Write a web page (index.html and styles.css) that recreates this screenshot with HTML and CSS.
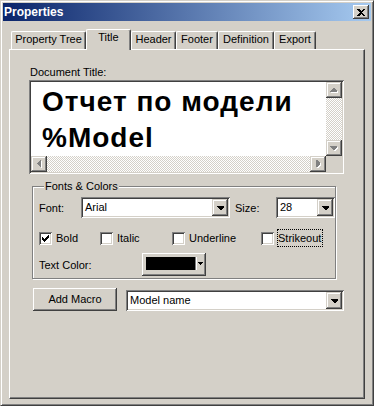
FILE: index.html
```html
<!DOCTYPE html>
<html lang="ru">
<head>
	<meta charset="UTF-8">
	<title>Properties</title>
	<link rel="stylesheet" href="styles.css">
</head>

<body>
	<div class="window">
		<div class="caption">
			<span class="caption-text">Properties</span>
			<span class="btn close-btn">
				<svg width="8" height="7" viewBox="0 0 8 7"><path d="M0 0H2L4 2L6 0H8L5 3.5L8 7H6L4 5L2 7H0L3 3.5Z"/></svg>
			</span>
		</div>

		<div class="dlg">
			<div class="tabs">
				<div class="tab tab-tree">Property Tree</div>
				<div class="tab tab-title active">Title</div>
				<div class="tab tab-header">Header</div>
				<div class="tab tab-footer">Footer</div>
				<div class="tab tab-def">Definition</div>
				<div class="tab tab-export">Export</div>
			</div>

			<div class="panel">
				<div class="doc-label">Document Title:</div>
				<div class="editbox">
					<div class="edit-text">Отчет по модели<br>%Model</div>
					<div class="vscroll">
						<span class="sbtn"><svg width="8" height="5" viewBox="0 0 8 5"><polygon class="hl" points="4,1 5,1 8,4 8,5 1,5 1,4"/><polygon class="ar" points="3,0 4,0 7,3 7,4 0,4 0,3"/></svg></span>
						<span class="track"></span>
						<span class="sbtn"><svg width="8" height="5" viewBox="0 0 8 5"><polygon class="hl" points="1,1 8,1 8,2 5,5 4,5 1,2"/><polygon class="ar" points="0,0 7,0 7,1 4,4 3,4 0,1"/></svg></span>
					</div>
					<div class="hscroll">
						<span class="sbtn"><svg width="5" height="8" viewBox="0 0 5 8"><polygon class="hl" points="1,4 4,1 5,1 5,8 4,8 1,5"/><polygon class="ar" points="0,3 3,0 4,0 4,7 3,7 0,4"/></svg></span>
						<span class="track"></span>
						<span class="sbtn"><svg width="5" height="8" viewBox="0 0 5 8"><polygon class="hl" points="1,1 2,1 5,4 5,5 2,8 1,8"/><polygon class="ar" points="0,0 1,0 4,3 4,4 1,7 0,7"/></svg></span>
					</div>
					<div class="corner"></div>
				</div>

				<fieldset class="group">
					<legend>Fonts &amp; Colors</legend>
					<div class="font-row">
						<span class="lbl-font">Font:</span>
						<div class="combo combo-font">
							<span class="combo-val">Arial</span>
							<span class="combo-btn"><svg width="7" height="4" viewBox="0 0 7 4"><polygon points="0,0 7,0 7,1 4,4 3,4 0,1"/></svg></span>
						</div>
						<span class="lbl-size">Size:</span>
						<div class="combo combo-size">
							<span class="combo-val">28</span>
							<span class="combo-btn"><svg width="7" height="4" viewBox="0 0 7 4"><polygon points="0,0 7,0 7,1 4,4 3,4 0,1"/></svg></span>
						</div>
					</div>
					<div class="checks">
						<label class="check"><span class="cbox"><svg width="7" height="7" viewBox="0 0 7 7"><polygon points="0,1.5 2.5,4 7,-0.5 7,2.5 2.5,7 0,4.5"/></svg></span><span class="check-text">Bold</span></label>
						<label class="check"><span class="cbox"></span><span class="check-text">Italic</span></label>
						<label class="check"><span class="cbox"></span><span class="check-text">Underline</span></label>
						<label class="check"><span class="cbox"></span><span class="check-text focus">Strikeout</span></label>
					</div>
					<div class="color-row">
						<span class="lbl-color">Text Color:</span>
						<div class="btn color-btn">
							<span class="swatch"></span>
							<span class="color-sep"></span>
							<span class="color-arrow"><svg width="5" height="3" viewBox="0 0 5 3"><polygon points="0,0 5,0 3,3 2,3"/></svg></span>
						</div>
					</div>
				</fieldset>

				<div class="macro-row">
					<div class="btn macro-btn">Add Macro</div>
					<div class="combo combo-macro">
						<span class="combo-val">Model name</span>
						<span class="combo-btn"><svg width="7" height="4" viewBox="0 0 7 4"><polygon points="0,0 7,0 7,1 4,4 3,4 0,1"/></svg></span>
					</div>
				</div>
			</div>
		</div>
	</div>
</body>

</html>
```

FILE: styles.css
```css
		*{
			margin: 0;
			padding: 0;
			box-sizing: border-box;
		}
		body{
			background-color: #d4d0c8;
			font: 11px "Liberation Sans", Arial, sans-serif;
			color: #000;
		}
		svg{
			display: block;
			shape-rendering: crispEdges;
		}
		/* window frame */
		.window{
			width: 374px;
			height: 406px;
			padding: 2px;
			border: 1px solid;
			border-color: #d4d0c8 #404040 #404040 #d4d0c8;
			box-shadow: inset 1px 1px #fff, inset -1px -1px #808080;
			display: flex;
			flex-direction: column;
		}
		.caption{
			height: 18px;
			display: flex;
			align-items: center;
			justify-content: space-between;
			padding: 0 2px 0 1px;
			background: linear-gradient(to right, #0a246a, #a6caf0);
			color: #fff;
			font-weight: bold;
			font-size: 12px;
		}
		.btn{
			background-color: #d4d0c8;
			box-shadow: inset -1px -1px #404040, inset 1px 1px #fff, inset -2px -2px #808080, inset 2px 2px #d4d0c8;
		}
		.close-btn{
			width: 16px;
			height: 14px;
			display: flex;
			align-items: center;
			justify-content: center;
		}
		.dlg{
			flex: 1;
			padding: 8px 6px 4px;
			display: flex;
			flex-direction: column;
		}
		/* tabs */
		.tabs{
			display: flex;
			align-items: flex-end;
			height: 20px;
			padding-left: 2px;
		}
		.tab{
			height: 18px;
			border: 1px solid #fff;
			border-bottom: 0;
			border-right-color: #404040;
			border-radius: 2px 2px 0 0;
			box-shadow: inset -1px 0 #808080;
			text-align: center;
			padding-top: 1px;
			line-height: 13px;
			white-space: nowrap;
		}
		.tab.active{
			height: 21px;
			margin-bottom: -1px;
			position: relative;
			z-index: 1;
			background-color: #d4d0c8;
		}
		.tab-tree{ width: 75px; }
		.tab-title{ width: 45px; }
		.tab-header{ width: 45px; }
		.tab-footer{ width: 42px; }
		.tab-def{ width: 56px; }
		.tab-export{ width: 42px; }
		.panel{
			flex: 1;
			border: 1px solid;
			border-color: #fff #404040 #404040 #fff;
			box-shadow: inset -1px -1px #808080;
			padding: 16px 0 0 19px;
		}
		.doc-label{
			line-height: 13px;
			padding-left: 1px;
		}
		/* title edit box */
		.editbox{
			width: 315px;
			height: 94px;
			margin-top: 1px;
			padding: 2px;
			background-color: #fff;
			box-shadow: inset 1px 1px #808080, inset -1px -1px #fff, inset 2px 2px #404040, inset -2px -2px #d4d0c8;
			display: grid;
			grid-template-columns: 1fr 16px;
			grid-template-rows: 1fr 16px;
		}
		.edit-text{
			font: bold 28px/36px "Liberation Sans", Arial, sans-serif;
			letter-spacing: 1px;
			padding: 2px 0 0 11px;
			white-space: nowrap;
			overflow: hidden;
		}
		.vscroll{
			display: flex;
			flex-direction: column;
		}
		.hscroll{
			display: flex;
		}
		.track{
			flex: 1;
			background: repeating-conic-gradient(#d4d0c8 0 25%, #fff 0 50%) 0 0/2px 2px;
		}
		.corner{
			background-color: #d4d0c8;
		}
		.sbtn, .combo-btn{
			width: 16px;
			height: 16px;
			flex: none;
			background-color: #d4d0c8;
			box-shadow: inset -1px -1px #404040, inset 1px 1px #d4d0c8, inset -2px -2px #808080, inset 2px 2px #fff;
			display: flex;
			align-items: center;
			justify-content: center;
		}
		.sbtn .hl{ fill: #fff; }
		.sbtn .ar{ fill: #808080; }
		/* group box */
		.group{
			margin: 6px 0 0 3px;
			width: 304px;
			border: 1px solid #808080;
			box-shadow: inset 1px 1px #fff, 1px 1px #fff;
			padding: 4px 0 2px 6px;
		}
		.group legend{
			margin-left: 5px;
			padding: 0 1px;
			line-height: 13px;
			background-color: #d4d0c8;
		}
		.font-row{
			display: flex;
			align-items: center;
			height: 21px;
		}
		.lbl-font{ width: 42px; }
		.lbl-size{ width: 41px; margin-left: 5px; }
		.combo{
			height: 21px;
			padding: 2px;
			background-color: #fff;
			box-shadow: inset 1px 1px #808080, inset -1px -1px #fff, inset 2px 2px #404040, inset -2px -2px #d4d0c8;
			display: flex;
		}
		.combo-val{
			flex: 1;
			padding-left: 2px;
			line-height: 17px;
			white-space: nowrap;
		}
		.combo .combo-btn{ height: 17px; }
		.combo-font{ width: 149px; }
		.combo-size{ width: 59px; }
		.combo-macro{ width: 218px; margin-left: 9px; }
		.checks{
			display: grid;
			grid-template-columns: 61px 72px 89px auto;
			align-items: center;
			height: 18px;
			margin-top: 11px;
		}
		.check{
			display: flex;
			align-items: center;
		}
		.cbox{
			width: 13px;
			height: 13px;
			background-color: #fff;
			box-shadow: inset 1px 1px #808080, inset -1px -1px #fff, inset 2px 2px #404040, inset -2px -2px #d4d0c8;
			display: flex;
			align-items: center;
			justify-content: center;
		}
		.check-text{
			margin-left: 3px;
			padding-right: 1px;
			border: 1px dotted transparent;
			line-height: 16px;
		}
		.check-text.focus{
			border-color: #000;
		}
		.color-row{
			display: flex;
			align-items: center;
			margin-top: 6px;
		}
		.lbl-color{ width: 103px; }
		.color-btn{
			width: 64px;
			height: 23px;
			padding: 4px 2px 0 4px;
			display: flex;
			align-items: flex-start;
		}
		.swatch{
			width: 49px;
			height: 13px;
			background-color: #000;
		}
		.color-sep{
			width: 2px;
			height: 13px;
			border-left: 1px solid #808080;
			border-right: 1px solid #fff;
		}
		.color-arrow{
			flex: 1;
			height: 13px;
			display: flex;
			align-items: center;
			justify-content: center;
		}
		.macro-row{
			display: flex;
			align-items: flex-end;
			margin: 9px 0 0 4px;
		}
		.macro-btn{
			width: 84px;
			height: 23px;
			line-height: 23px;
			text-align: center;
		}
```
